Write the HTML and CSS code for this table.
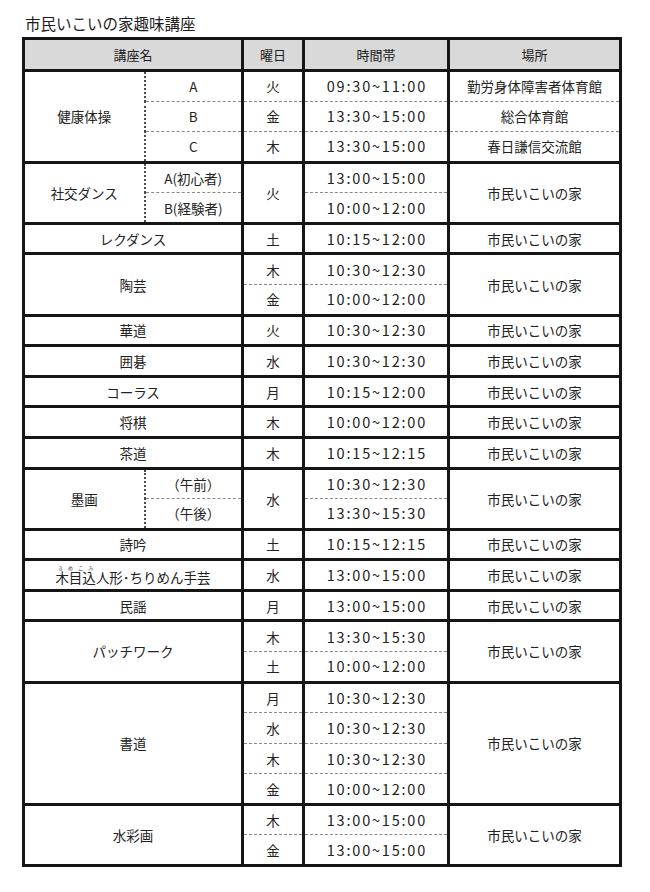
FILE: index.html
```html
<!DOCTYPE html>
<html lang="ja">
<head>
<meta charset="utf-8">
<title>市民いこいの家趣味講座</title>
<link rel="stylesheet" href="styles.css">
</head>
<body>
<div class="page">
  <h1 class="title">市民いこいの家趣味講座</h1>
  <table class="sched">
    <colgroup>
      <col class="c-n1"><col class="c-n2"><col class="c-day"><col class="c-time"><col class="c-place">
    </colgroup>
    <thead>
      <tr><th colspan="2">講座名</th><th>曜日</th><th>時間帯</th><th>場所</th></tr>
    </thead>
    <tbody>
      <tr><td rowspan="3" class="nm">健康体操</td><td class="sub">A</td><td>火</td><td class="tm">09:30~11:00</td><td>勤労身体障害者体育館</td></tr>
      <tr class="s"><td class="sub">B</td><td>金</td><td class="tm">13:30~15:00</td><td>総合体育館</td></tr>
      <tr class="s"><td class="sub">C</td><td>木</td><td class="tm">13:30~15:00</td><td>春日謙信交流館</td></tr>

      <tr><td rowspan="2" class="nm">社交ダンス</td><td class="sub">A(初心者)</td><td rowspan="2">火</td><td class="tm">13:00~15:00</td><td rowspan="2">市民いこいの家</td></tr>
      <tr class="s"><td class="sub">B(経験者)</td><td class="tm">10:00~12:00</td></tr>

      <tr><td colspan="2">レクダンス</td><td>土</td><td class="tm">10:15~12:00</td><td>市民いこいの家</td></tr>

      <tr><td colspan="2" rowspan="2">陶芸</td><td>木</td><td class="tm">10:30~12:30</td><td rowspan="2">市民いこいの家</td></tr>
      <tr class="s"><td>金</td><td class="tm">10:00~12:00</td></tr>

      <tr><td colspan="2">華道</td><td>火</td><td class="tm">10:30~12:30</td><td>市民いこいの家</td></tr>
      <tr><td colspan="2">囲碁</td><td>水</td><td class="tm">10:30~12:30</td><td>市民いこいの家</td></tr>
      <tr><td colspan="2">コーラス</td><td>月</td><td class="tm">10:15~12:00</td><td>市民いこいの家</td></tr>
      <tr><td colspan="2">将棋</td><td>木</td><td class="tm">10:00~12:00</td><td>市民いこいの家</td></tr>
      <tr><td colspan="2">茶道</td><td>木</td><td class="tm">10:15~12:15</td><td>市民いこいの家</td></tr>

      <tr><td rowspan="2" class="nm">墨画</td><td class="sub">（午前）</td><td rowspan="2">水</td><td class="tm">10:30~12:30</td><td rowspan="2">市民いこいの家</td></tr>
      <tr class="s"><td class="sub">（午後）</td><td class="tm">13:30~15:30</td></tr>

      <tr><td colspan="2">詩吟</td><td>土</td><td class="tm">10:15~12:15</td><td>市民いこいの家</td></tr>
      <tr><td colspan="2"><ruby>木目込<rt>きめこみ</rt></ruby>人形･ちりめん手芸</td><td>水</td><td class="tm">13:00~15:00</td><td>市民いこいの家</td></tr>
      <tr><td colspan="2">民謡</td><td>月</td><td class="tm">13:00~15:00</td><td>市民いこいの家</td></tr>

      <tr><td colspan="2" rowspan="2">パッチワーク</td><td>木</td><td class="tm">13:30~15:30</td><td rowspan="2">市民いこいの家</td></tr>
      <tr class="s"><td>土</td><td class="tm">10:00~12:00</td></tr>

      <tr><td colspan="2" rowspan="4">書道</td><td>月</td><td class="tm">10:30~12:30</td><td rowspan="4">市民いこいの家</td></tr>
      <tr class="s"><td>水</td><td class="tm">10:30~12:30</td></tr>
      <tr class="s"><td>木</td><td class="tm">10:30~12:30</td></tr>
      <tr class="s"><td>金</td><td class="tm">10:00~12:00</td></tr>

      <tr><td colspan="2" rowspan="2">水彩画</td><td>木</td><td class="tm">13:00~15:00</td><td rowspan="2">市民いこいの家</td></tr>
      <tr class="s"><td>金</td><td class="tm">13:00~15:00</td></tr>
    </tbody>
  </table>
</div>
</body>
</html>
```

FILE: styles.css
```css
html, body {
  margin: 0;
  padding: 0;
  background: #ffffff;
}

body {
  font-family: "Noto Sans CJK JP", "Noto Sans", sans-serif;
  color: #222222;
}

.page {
  padding: 13px 0 0 22px;
}

.title {
  margin: 0 0 4px 3px;
  font-size: 15.5px;
  font-weight: normal;
  line-height: 20px;
  color: #1e1e1e;
}

.sched {
  border-collapse: collapse;
  border: 3px solid #151515;
  table-layout: fixed;
  width: 600px;
}

.c-n1 { width: 121px; }
.c-n2 { width: 98px; }
.c-day { width: 61px; }
.c-time { width: 145px; }
.c-place { width: 172px; }

.sched th,
.sched td {
  border-left: 3px solid #151515;
  border-right: 3px solid #151515;
  border-top: 3px solid #151515;
  border-bottom: none;
  padding: 0;
  text-align: center;
  vertical-align: middle;
  font-size: 13.5px;
  font-weight: normal;
  line-height: 18px;
  white-space: nowrap;
}

.sched thead tr {
  height: 32px;
}

.sched th {
  background: #d9d9d9;
  font-size: 13px;
  border-bottom: 3px solid #151515;
}

.sched tbody tr {
  height: 30.58px;
}

.sched tbody tr.s td {
  border-top: 1px dashed #8a8a8a;
}

.sched td.nm {
  border-right: 2px dotted #4a4a4a;
}

.sched td.sub {
  border-left: 2px dotted #4a4a4a;
}

.sched td.tm {
  letter-spacing: 1.8px;
  font-size: 14.5px;
  text-indent: 1.8px;
}

ruby rt {
  font-size: 5px;
  line-height: 5px;
  color: #333;
}
```
